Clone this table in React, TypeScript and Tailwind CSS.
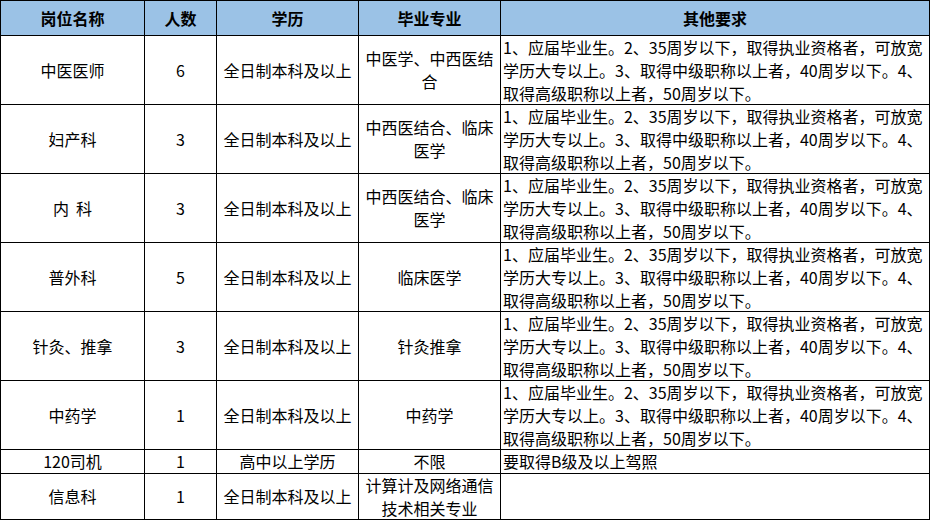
import React from "react";

const req = [
  "1、应届毕业生。2、35周岁以下，取得执业资格者，可放宽",
  "学历大专以上。3、取得中级职称以上者，40周岁以下。4、",
  "取得高级职称以上者，50周岁以下。",
];

type Row = {
  name: string;
  num: string;
  edu: string;
  major: string[];
  other: string[];
  h: string;
};

const rows: Row[] = [
  { name: "中医医师", num: "6", edu: "全日制本科及以上", major: ["中医学、中西医结", "合"], other: req, h: "h-[69px]" },
  { name: "妇产科", num: "3", edu: "全日制本科及以上", major: ["中西医结合、临床", "医学"], other: req, h: "h-[69px]" },
  { name: "内  科", num: "3", edu: "全日制本科及以上", major: ["中西医结合、临床", "医学"], other: req, h: "h-[69px]" },
  { name: "普外科", num: "5", edu: "全日制本科及以上", major: ["临床医学"], other: req, h: "h-[69px]" },
  { name: "针灸、推拿", num: "3", edu: "全日制本科及以上", major: ["针灸推拿"], other: req, h: "h-[69px]" },
  { name: "中药学", num: "1", edu: "全日制本科及以上", major: ["中药学"], other: req, h: "h-[69px]" },
  { name: "120司机", num: "1", edu: "高中以上学历", major: ["不限"], other: ["要取得B级及以上驾照"], h: "h-[24px]" },
  { name: "信息科", num: "1", edu: "全日制本科及以上", major: ["计算计及网络通信", "技术相关专业"], other: [], h: "h-[46px]" },
];

const font = { fontFamily: '"Noto Sans CJK SC", "Noto Sans", sans-serif' };

function Cell({ children, h, left }: { children: React.ReactNode; h: string; left?: boolean }) {
  return (
    <div
      className={`${h} border-r border-b border-black flex flex-col justify-center overflow-hidden ${
        left ? "items-start pl-[2px]" : "items-center text-center"
      }`}
    >
      {children}
    </div>
  );
}

export default function App() {
  return (
    <div className="w-[931px] h-[520px] bg-white overflow-hidden" style={font}>
      <div className="w-[930px] border-l border-t border-black grid grid-cols-[144px_72px_142px_142px_429px] text-[16px] leading-[23px] text-black">
        {["岗位名称", "人数", "学历", "毕业专业", "其他要求"].map((t) => (
          <div
            key={t}
            className="h-[35px] border-r border-b border-black bg-[#9bc2e6] flex items-center justify-center font-bold"
          >
            {t}
          </div>
        ))}
        {rows.map((r, i) => (
          <React.Fragment key={i}>
            <Cell h={r.h}>
              <span className="whitespace-pre">{r.name}</span>
            </Cell>
            <Cell h={r.h}>{r.num}</Cell>
            <Cell h={r.h}>{r.edu}</Cell>
            <Cell h={r.h}>
              {r.major.map((m, j) => (
                <div key={j} className="whitespace-nowrap">
                  {m}
                </div>
              ))}
            </Cell>
            <Cell h={r.h} left>
              {r.other.map((m, j) => (
                <div key={j} className="whitespace-nowrap">
                  {m}
                </div>
              ))}
            </Cell>
          </React.Fragment>
        ))}
      </div>
    </div>
  );
}
